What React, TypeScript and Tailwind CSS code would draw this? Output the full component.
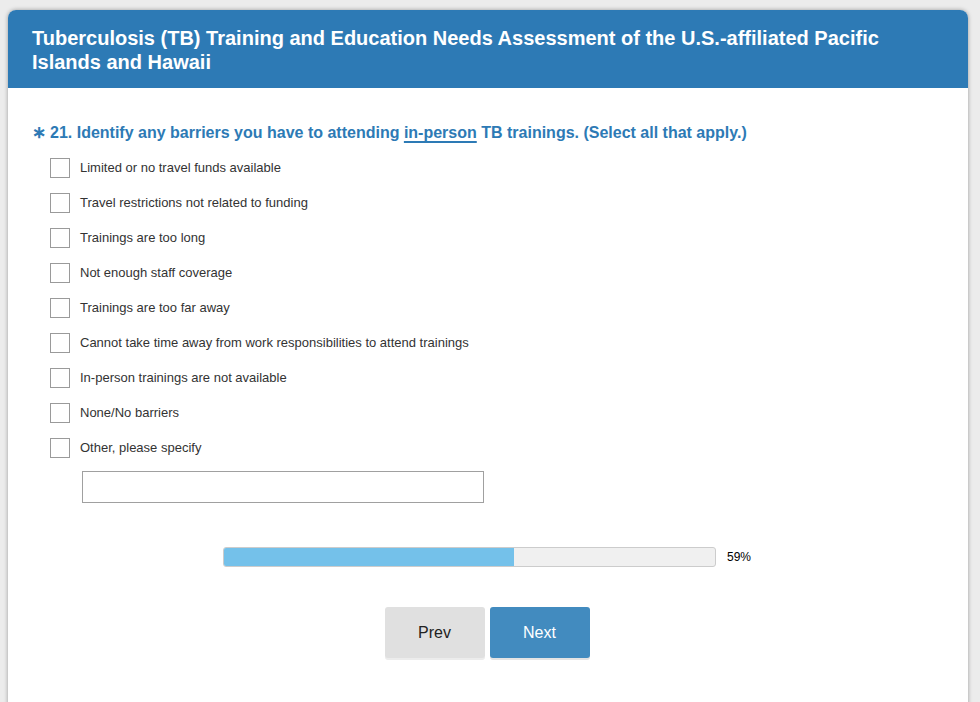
import { useState } from "react";

const options = [
  "Limited or no travel funds available",
  "Travel restrictions not related to funding",
  "Trainings are too long",
  "Not enough staff coverage",
  "Trainings are too far away",
  "Cannot take time away from work responsibilities to attend trainings",
  "In-person trainings are not available",
  "None/No barriers",
  "Other, please specify",
];

export default function App() {
  const [checked, setChecked] = useState<boolean[]>(options.map(() => false));
  const progress = 59;

  return (
    <div className="min-h-[702px] bg-[#ececec] pt-[10px] pl-[8px] pr-[12px] font-['Liberation_Sans',Arial,sans-serif]">
      <div className="w-[960px] min-h-[700px] rounded-t-[8px] bg-white shadow-[0_0_4px_rgba(0,0,0,0.35)] overflow-hidden">
        <div className="bg-[#2d7ab5] pl-[24px] pr-[40px] pt-[16px] pb-[17px] h-[78px]">
          <h1 className="text-white font-bold text-[20px] leading-[24px]">
            Tuberculosis (TB) Training and Education Needs Assessment of the U.S.-affiliated Pacific Islands and Hawaii
          </h1>
        </div>

        <div className="pl-[24px] pt-[35px]">
          <div className="flex items-baseline text-[#2d7ab5] font-bold text-[16px] leading-[20px]">
            <span className="mr-[4px] text-[17px]">∗</span>
            <span>
              21. Identify any barriers you have to attending{" "}
              <span className="underline underline-offset-[3px] decoration-[2px]">in-person</span> TB trainings.
              (Select all that apply.)
            </span>
          </div>

          <div className="mt-[7px] pl-[18px] flex flex-col">
            {options.map((opt, i) => (
              <label key={opt} className="flex items-center h-[35px] cursor-pointer">
                <span
                  onClick={() => setChecked((c) => c.map((v, j) => (j === i ? !v : v)))}
                  className={`w-[20px] h-[20px] border border-[#9a9a9a] mr-[10px] ${checked[i] ? "bg-[#2d7ab5]" : "bg-white"}`}
                />
                <span className="text-[13px] text-[#333333]">{opt}</span>
              </label>
            ))}
          </div>

          <input
            type="text"
            className="block mt-[6px] ml-[50px] w-[402px] h-[32px] border border-[#a0a0a0] outline-none px-2 text-[13px]"
          />
        </div>

        <div className="mt-[44px] flex items-center pl-[215px]">
          <div className="w-[493px] h-[20px] rounded-[3px] border border-[#cccccc] bg-[#f0f0f0] overflow-hidden">
            <div className="h-full bg-[#74c1ea]" style={{ width: `${progress}%` }} />
          </div>
          <span className="ml-[11px] text-[12px] text-black">{progress}%</span>
        </div>

        <div className="mt-[40px] flex justify-center gap-[5px] pr-[2px]">
          <button className="w-[100px] h-[51px] rounded-[3px] bg-[#e0e0e0] text-[16px] text-[#222] shadow-[0_2px_0_#ececec]">
            Prev
          </button>
          <button className="w-[100px] h-[51px] rounded-[3px] bg-[#428bbf] text-[16px] text-white shadow-[0_2px_0_#e4e4e4]">
            Next
          </button>
        </div>
      </div>
    </div>
  );
}
